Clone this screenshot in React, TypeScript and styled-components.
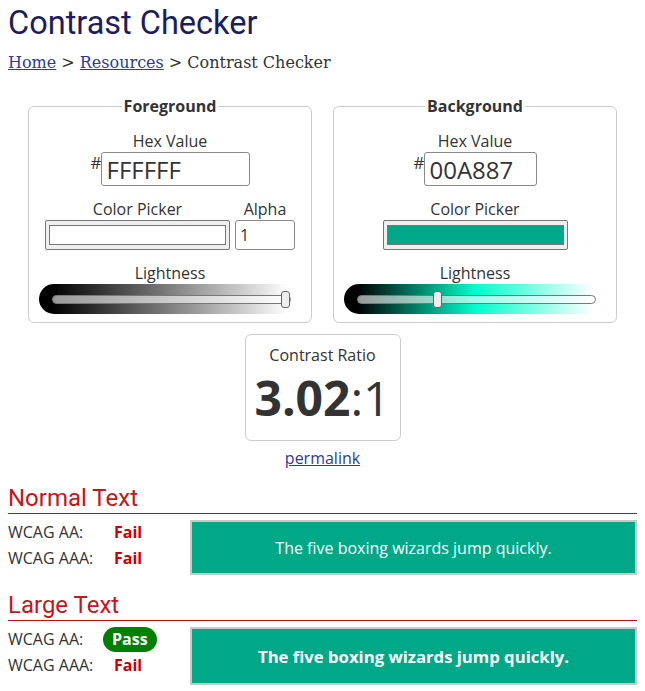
import React from 'react';
import styled, { createGlobalStyle } from 'styled-components';

const GlobalStyle = createGlobalStyle`
  body {
    margin: 0;
    background: #fff;
    color: #333;
    font-family: "Open Sans", sans-serif;
    font-size: 16px;
  }
`;

const Page = styled.div`
  padding: 0 8px;
`;

const Title = styled.h1`
  margin: 3px 0 0;
  font-family: Roboto, sans-serif;
  font-weight: 400;
  font-size: 32.5px;
  line-height: 40px;
  color: #1c1d5e;
`;

const Crumbs = styled.nav`
  margin-top: 10px;
  font-family: "DejaVu Serif", serif;
  font-size: 16px;
  line-height: 20px;
  color: #333;
  a {
    color: #2b3a9c;
  }
`;

const Pickers = styled.div`
  display: flex;
  justify-content: center;
  gap: 21px;
  margin-top: 22px;
`;

const Box = styled.fieldset`
  width: 284px;
  min-width: 0;
  box-sizing: border-box;
  margin: 0;
  padding: 0 10px 8px;
  border: 1px solid #ccc;
  border-radius: 6px;
`;

const Legend = styled.legend`
  margin: 0 auto;
  padding: 0 2px;
  font-weight: 700;
  font-size: 16px;
  line-height: 22px;
  color: #333;
`;

const BoxBody = styled.div`
  display: flex;
  flex-direction: column;
  align-items: center;
  gap: 12px;
  padding-top: 13px;
`;

const Field = styled.div`
  display: flex;
  flex-direction: column;
  align-items: center;
`;

const Label = styled.label`
  font-size: 16px;
  line-height: 22px;
  color: #333;
`;

const HexWrap = styled.div`
  display: flex;
  align-items: flex-start;
`;

const Hash = styled.span`
  font-size: 17px;
  line-height: 18px;
  margin-top: 2px;
  width: 10px;
`;

const HexInput = styled.input<{ $w: number }>`
  width: ${(p) => p.$w}px;
  height: 34px;
  box-sizing: border-box;
  padding: 0 5px;
  border: 1px solid #888;
  border-radius: 3px;
  font-family: "Open Sans", sans-serif;
  font-size: 24px;
  color: #333;
  outline: none;
`;

const PickerRow = styled.div`
  display: flex;
  gap: 5px;
`;

const Swatch = styled.div`
  width: 185px;
  height: 30px;
  box-sizing: border-box;
  padding: 4px 3px;
  background: #efefef;
  border: 1px solid #767676;
  border-radius: 2px;
`;

const SwatchFill = styled.div<{ $color: string }>`
  height: 100%;
  box-sizing: border-box;
  background: ${(p) => p.$color};
  border: 1px solid #777;
`;

const AlphaInput = styled.input`
  width: 60px;
  height: 30px;
  box-sizing: border-box;
  padding: 0 4px;
  border: 1px solid #888;
  border-radius: 3px;
  font-family: "Open Sans", sans-serif;
  font-size: 16px;
  color: #333;
  outline: none;
`;

const SliderBar = styled.div<{ $gradient: string }>`
  width: 263px;
  height: 30px;
  box-sizing: border-box;
  padding: 0 11px 0 13px;
  display: flex;
  align-items: center;
  border-radius: 15px;
  background: ${(p) => p.$gradient};
`;

const Track = styled.div`
  position: relative;
  flex: 1;
  height: 9px;
  box-sizing: border-box;
  border: 1px solid #777;
  border-radius: 5px;
  background: rgba(255, 255, 255, 0.6);
`;

const Thumb = styled.div`
  position: absolute;
  top: -5px;
  width: 9px;
  height: 17px;
  box-sizing: border-box;
  background: #eee;
  border: 1px solid #666;
  border-radius: 3px;
`;

const RatioBox = styled.div`
  width: 156px;
  box-sizing: border-box;
  margin: 11px auto 0;
  padding: 9px 0 12px;
  border: 1px solid #ccc;
  border-radius: 6px;
  text-align: center;
`;

const Ratio = styled.div`
  margin-top: 2px;
  font-size: 48px;
  line-height: 60px;
  color: #333;
  b {
    font-weight: 700;
  }
`;

const Permalink = styled.a`
  display: block;
  width: max-content;
  margin: 6px auto 0;
  line-height: 22px;
  color: #2b3a9c;
`;

const SectionTitle = styled.h2<{ $gap: number }>`
  margin: ${(p) => p.$gap}px 0 0;
  font-family: Roboto, sans-serif;
  font-weight: 400;
  font-size: 24px;
  line-height: 30px;
  color: #c4161c;
  border-bottom: 1px solid #b5121b;
`;

const ResultRow = styled.div`
  display: flex;
  margin-top: 5px;
`;

const Checks = styled.div`
  width: 182px;
  flex-shrink: 0;
`;

const CheckRow = styled.div`
  display: flex;
  align-items: center;
  height: 26px;
`;

const CheckName = styled.span`
  width: 95px;
  line-height: 26px;
`;

const Status = styled.span<{ $pass: boolean }>`
  padding: 0 ${(p) => (p.$pass ? 9 : 11)}px;
  height: 25px;
  line-height: 25px;
  border-radius: 13px;
  font-weight: 700;
  color: ${(p) => (p.$pass ? '#fff' : '#c00')};
  background: ${(p) => (p.$pass ? '#008000' : 'transparent')};
`;

const Sample = styled.div<{ $large: boolean }>`
  flex: 1;
  margin-top: 1px;
  height: ${(p) => (p.$large ? 58 : 55)}px;
  box-sizing: border-box;
  display: flex;
  align-items: center;
  justify-content: center;
  background: #00a887;
  border: 2px solid #c8c8c8;
  color: #fff;
  font-size: ${(p) => (p.$large ? 16.7 : 16)}px;
  font-weight: ${(p) => (p.$large ? 700 : 400)};
`;

function Slider({ gradient, value }: { gradient: string; value: number }) {
  return (
    <SliderBar $gradient={gradient}>
      <Track>
        <Thumb style={{ left: `calc(${value} * (100% - 9px))` }} />
      </Track>
    </SliderBar>
  );
}

function Results({ title, gap, large, checks }: { title: string; gap: number; large: boolean; checks: [string, boolean][] }) {
  return (
    <>
      <SectionTitle $gap={gap}>{title}</SectionTitle>
      <ResultRow>
        <Checks>
          {checks.map(([name, pass]) => (
            <CheckRow key={name}>
              <CheckName>{name}</CheckName>
              <Status $pass={pass}>{pass ? 'Pass' : 'Fail'}</Status>
            </CheckRow>
          ))}
        </Checks>
        <Sample $large={large}>The five boxing wizards jump quickly.</Sample>
      </ResultRow>
    </>
  );
}

export default function App() {
  return (
    <Page>
      <GlobalStyle />
      <Title>Contrast Checker</Title>
      <Crumbs>
        <a href="#">Home</a> &gt; <a href="#">Resources</a> &gt; Contrast Checker
      </Crumbs>

      <Pickers>
        <Box>
          <Legend>Foreground</Legend>
          <BoxBody>
            <Field>
              <Label>Hex Value</Label>
              <HexWrap>
                <Hash>#</Hash>
                <HexInput $w={149} defaultValue="FFFFFF" />
              </HexWrap>
            </Field>
            <PickerRow>
              <Field>
                <Label>Color Picker</Label>
                <Swatch>
                  <SwatchFill $color="#ffffff" />
                </Swatch>
              </Field>
              <Field>
                <Label>Alpha</Label>
                <AlphaInput defaultValue="1" />
              </Field>
            </PickerRow>
            <Field>
              <Label>Lightness</Label>
              <Slider gradient="linear-gradient(to right, #000 13px, #fff calc(100% - 13px))" value={1} />
            </Field>
          </BoxBody>
        </Box>

        <Box>
          <Legend>Background</Legend>
          <BoxBody>
            <Field>
              <Label>Hex Value</Label>
              <HexWrap>
                <Hash>#</Hash>
                <HexInput $w={113} defaultValue="00A887" />
              </HexWrap>
            </Field>
            <Field>
              <Label>Color Picker</Label>
              <Swatch>
                <SwatchFill $color="#00a887" />
              </Swatch>
            </Field>
            <Field>
              <Label>Lightness</Label>
              <Slider
                gradient="linear-gradient(to right, #000 13px, #00ffcc 50%, #fff calc(100% - 13px))"
                value={0.33}
              />
            </Field>
          </BoxBody>
        </Box>
      </Pickers>

      <RatioBox>
        <Label>Contrast Ratio</Label>
        <Ratio>
          <b>3.02</b>:1
        </Ratio>
      </RatioBox>
      <Permalink href="#">permalink</Permalink>

      <Results title="Normal Text" gap={14} large={false} checks={[['WCAG AA:', false], ['WCAG AAA:', false]]} />
      <Results title="Large Text" gap={15} large checks={[['WCAG AA:', true], ['WCAG AAA:', false]]} />
    </Page>
  );
}
